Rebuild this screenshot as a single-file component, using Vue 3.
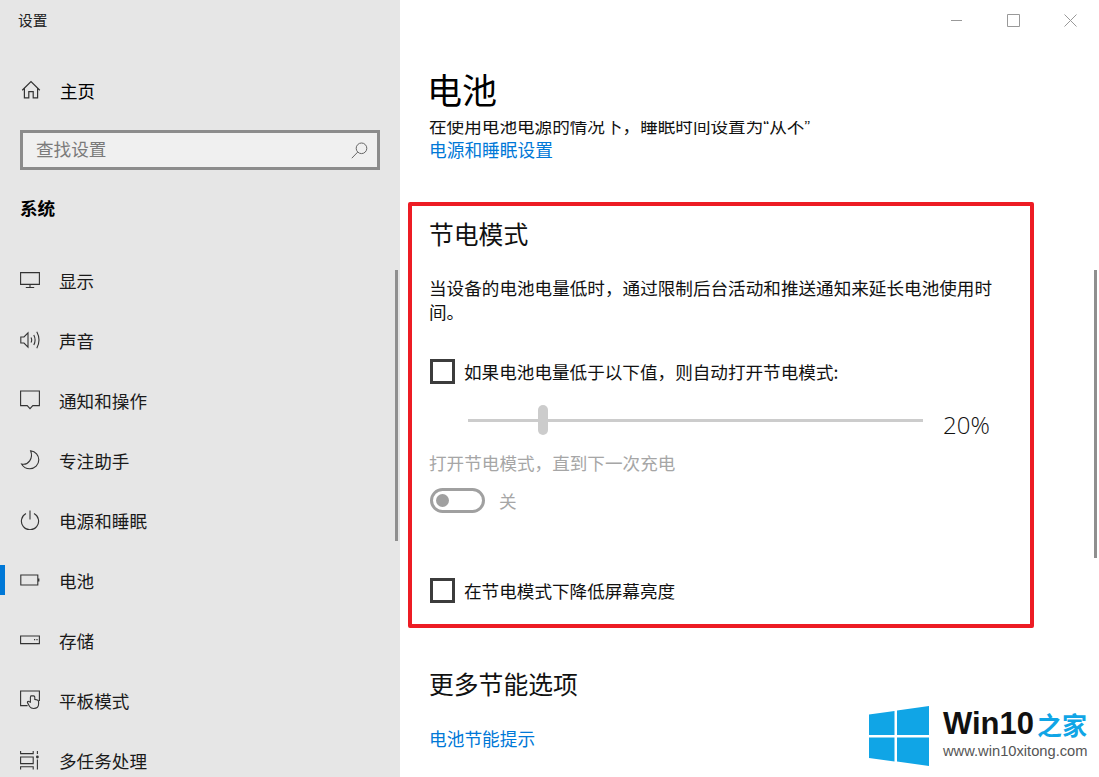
<script setup>
const nav = [
  { key: 'display', label: '显示' },
  { key: 'sound', label: '声音' },
  { key: 'notify', label: '通知和操作' },
  { key: 'focus', label: '专注助手' },
  { key: 'power', label: '电源和睡眠' },
  { key: 'battery', label: '电池', active: true },
  { key: 'storage', label: '存储' },
  { key: 'tablet', label: '平板模式' },
  { key: 'multi', label: '多任务处理' }
]
</script>

<template>
  <div class="window">
    <aside class="side">
      <div class="app-title">设置</div>
      <div class="home">
        <svg class="ico" width="20" height="20" viewBox="0 0 20 20" fill="none" stroke="#333" stroke-width="1.2">
          <path d="M1.2 10.200 10 1.600l8.800 8.600M3.400 8.400v9.400h4.400v-6.200h4.400v6.200h4.400V8.400" />
        </svg>
        <span class="home-label">主页</span>
      </div>
      <div class="search">
        <span class="ph">查找设置</span>
        <svg width="17" height="17" viewBox="0 0 17 17" fill="none" stroke="#666" stroke-width="1">
          <circle cx="10.500" cy="6.300" r="5.300" /><path d="M6.700 10.100.8 16.200" />
        </svg>
      </div>
      <div class="group">系统</div>
      <nav class="nav">
        <div v-for="item in nav" :key="item.key" class="row">
          <i v-if="item.active" class="mark"></i>
          <svg class="ico" width="20" height="20" viewBox="0 0 20 20" fill="none" stroke="#333" stroke-width="1.1">
            <template v-if="item.key === 'display'">
              <path d="M.6 2.600h18.800v11.800H.6zM10 14.400v3M5.800 17.500h8.400" />
            </template>
            <template v-else-if="item.key === 'sound'">
              <path d="M.8 7h3.200L8 2.800v14.400L4 13H.8zM11 7.400q1.400 2.600 0 5.200M13.800 5q2.600 5 0 10M16.800 1.800q4.400 8.200 0 16.400" />
            </template>
            <template v-else-if="item.key === 'notify'">
              <path d="M.6 1h18.800v14.600h-6.600L10 18.600l-2.800-3H.6z" />
            </template>
            <template v-else-if="item.key === 'focus'">
              <path d="M10.600.8c5 .6 8.200 4.600 8.200 9 0 5-4 9-9 9-3.600 0-6.600-1.800-8.200-4.800 6.600 1.600 12-5.600 9-13.200z" />
            </template>
            <template v-else-if="item.key === 'power'">
              <path d="M6 3.600a8.600 8.600 0 1 0 8 0M10 .6v9" />
            </template>
            <template v-else-if="item.key === 'battery'">
              <path d="M.8 5h17v10H.8z" />
              <path d="M18 8.500h1.400v3H18z" fill="#333" stroke="none" />
            </template>
            <template v-else-if="item.key === 'storage'">
              <path d="M.6 6h18.800v7.600H.6zM14 9.600h1.200M16.400 9.600h1.200" />
            </template>
            <template v-else-if="item.key === 'tablet'">
              <path d="M7.600 15.600H.6V1h18.800v10" />
              <path d="M12 5.600c-1 0-1.600.7-1.600 1.600v5l-1.600-.8c-1-.4-1.800.6-1.200 1.500l2 3.600c1 1.400 2.400 2 4 2 3 0 5-1.600 5-4.400v-2.600c0-1.400-1.600-1.800-3.800-2.100V7.200c0-.9-.8-1.600-2.800-1.600z" />
            </template>
            <template v-else>
              <path d="M.6 1v2.600h12.600V1M.6 7h12.600v6.600H.6zM.6 19.600v-2.800h12.600v2.800M17.400 1v3M17.400 9.600v10" />
              <circle cx="17.400" cy="7" r="1.400" fill="#333" stroke="none" />
            </template>
          </svg>
          <span class="row-label">{{ item.label }}</span>
        </div>
      </nav>
      <i class="side-scroll"></i>
    </aside>

    <main class="main">
      <div class="controls">
        <svg width="13" height="13" viewBox="0 0 13 13" stroke="#999" fill="none"><path d="M1 6.500h11" /></svg>
        <svg width="13" height="13" viewBox="0 0 13 13" stroke="#999" fill="none"><path d="M.5.500h12v12H.5z" /></svg>
        <svg width="13" height="13" viewBox="0 0 13 13" stroke="#999" fill="none"><path d="M.5.500l12 12M12.500.500l-12 12" /></svg>
      </div>
      <h1 class="title">电池</h1>
      <div class="clip"><p class="clip-text">在使用电池电源的情况下，睡眠时间设置为<span class="q">“</span>从不<span class="q">”</span></p></div>
      <a class="link">电源和睡眠设置</a>

      <section class="box">
        <h2 class="h2">节电模式</h2>
        <p class="desc">当设备的电池电量低时，通过限制后台活动和推送通知来延长电池使用时间。</p>
        <div class="check first"><i class="cb"></i><span>如果电池电量低于以下值，则自动打开节电模式:</span></div>
        <div class="slider">
          <div class="track"><i class="thumb"></i></div>
          <span class="pct">20%</span>
        </div>
        <div class="muted label">打开节电模式，直到下一次充电</div>
        <div class="toggle-row">
          <span class="toggle"><i class="knob"></i></span>
          <span class="muted">关</span>
        </div>
        <div class="check second"><i class="cb"></i><span>在节电模式下降低屏幕亮度</span></div>
      </section>

      <h2 class="h2 more">更多节能选项</h2>
      <a class="link tip">电池节能提示</a>
      <i class="main-scroll"></i>
    </main>

    <div class="mark-logo">
      <svg width="60" height="60" viewBox="0 0 60 60" fill="#10a5e6">
        <path d="M0 8.500 25.500 5v24H0zM28 4.600 60 0v29H28zM0 31.500h25.500v24L0 52zM28 31.500h32V60l-32-4.500z" />
      </svg>
      <div class="mark-text">
        <div class="mark-top"><span class="w">Win10</span><span class="z">之家</span></div>
        <div class="mark-url">www.win10xitong.com</div>
      </div>
    </div>
  </div>
</template>

<style>
html, body { margin: 0; overflow: hidden; background: #fff; }
</style>

<style scoped>
.window {
  position: relative;
  display: flex;
  width: 1099px;
  height: 777px;
  overflow: hidden;
  font-family: "Noto Sans CJK SC", "Noto Sans", sans-serif;
  font-size: 17.6px;
  color: #111;
}
.side {
  position: relative;
  flex: 0 0 400px;
  background: #e6e6e6;
  box-sizing: border-box;
}
.app-title {
  height: 20px;
  padding: 10px 0 0 18px;
  font-size: 14.700px;
  line-height: 20px;
  color: #222;
}
.home {
  display: flex;
  align-items: center;
  height: 40px;
  margin-top: 40px;
  padding-left: 21px;
}
.home-label { margin-left: 19px; color: #000; }
.ico { flex: none; display: block; }
.search {
  display: flex;
  align-items: center;
  justify-content: space-between;
  box-sizing: border-box;
  width: 360px;
  height: 40px;
  margin: 20px 0 0 20px;
  padding: 0 9px 0 13px;
  border: 3px solid #8c8c8c;
  background: #f0f0f0;
}
.ph { color: #7a7a7a; line-height: 32px; margin-top: -2px; }
.group {
  margin: 25px 0 0 20px;
  height: 26px;
  line-height: 26px;
  font-weight: 700;
  color: #000;
}
.nav { margin-top: 29px; }
.row {
  position: relative;
  display: flex;
  align-items: center;
  height: 60px;
  padding-left: 20px;
}
.row-label { margin-left: 19px; color: #1a1a1a; }
.mark {
  position: absolute;
  left: 0;
  top: 15px;
  width: 5px;
  height: 30px;
  background: #0078d7;
}
.side-scroll {
  position: absolute;
  left: 395px;
  top: 270px;
  width: 3px;
  height: 271px;
  background: #8f8f8f;
}
.main {
  position: relative;
  flex: 1;
  min-width: 0;
  background: #fff;
}
.controls {
  display: flex;
  justify-content: flex-end;
  gap: 44px;
  height: 13px;
  padding: 14px 22px 0 0;
}
.controls svg { display: block; }
.title {
  margin: 37px 0 0 27px;
  height: 50px;
  font-size: 35px;
  line-height: 50px;
  font-weight: 400;
  color: #000;
}
.clip {
  height: 15px;
  margin: 7px 0 0 29px;
  overflow: hidden;
}
.clip-text {
  margin: -8px 0 0;
  line-height: 26px;
  white-space: nowrap;
  color: #111;
}
.q { font-family: "Liberation Sans", sans-serif; }
.link {
  display: block;
  color: #0078d7;
  font-size: 17.700px;
  line-height: 26px;
  margin-left: 29px;
}
.box {
  box-sizing: border-box;
  width: 626px;
  height: 426px;
  margin: 40px 0 0 8px;
  padding: 0 0 0 18px;
  border: 4px solid #ed1c24;
  border-radius: 2px;
}
.h2 {
  margin: 0;
  font-size: 24.800px;
  line-height: 36px;
  font-weight: 400;
  color: #111;
}
.box > .h2 { margin: 9px 0 0 -1px; }
.desc {
  width: 566px;
  margin: 25px 0 0 -1px;
  line-height: 24px;
  color: #111;
}
.check {
  display: flex;
  align-items: center;
  gap: 9px;
  height: 25px;
  color: #111;
}
.first { margin-top: 35px; }
.second { margin-top: 65px; }
.cb {
  box-sizing: border-box;
  display: block;
  width: 25px;
  height: 25px;
  border: 3px solid #3c3c3c;
  flex: none;
}
.slider {
  display: flex;
  align-items: center;
  height: 30px;
  margin: 21px 0 0 38px;
}
.track {
  position: relative;
  width: 455px;
  height: 3px;
  background: #ccc;
}
.thumb {
  position: absolute;
  left: 70px;
  top: -14px;
  width: 10px;
  height: 30px;
  border-radius: 5px;
  background: #ccc;
}
.pct {
  margin: 10px 0 0 20px;
  font-family: "Open Sans", sans-serif;
  font-size: 24px;
  font-weight: 300;
  line-height: 30px;
  color: #111;
}
.muted { color: #a6a6a6; }
.label { margin: 13px 0 0 -1px; height: 30px; line-height: 30px; }
.toggle-row {
  display: flex;
  align-items: center;
  gap: 14px;
  margin-top: 10px;
  height: 25px;
}
.toggle {
  box-sizing: border-box;
  position: relative;
  display: block;
  width: 55px;
  height: 25px;
  border: 3px solid #a0a0a0;
  border-radius: 13px;
}
.knob {
  position: absolute;
  left: 3px;
  top: 3px;
  width: 13px;
  height: 13px;
  border-radius: 50%;
  background: #a0a0a0;
}
.more { margin: 37px 0 0 29px; }
.tip { margin-top: 24px; }
.main-scroll {
  position: absolute;
  left: 694px;
  top: 270px;
  width: 3px;
  height: 288px;
  background: #8f8f8f;
}
.mark-logo {
  position: absolute;
  left: 869px;
  top: 706px;
  display: flex;
  gap: 14px;
}
.mark-logo svg { display: block; flex: none; }
.mark-text { width: 150px; }
.mark-top {
  display: flex;
  align-items: center;
  height: 36px;
}
.w {
  font-family: "Liberation Sans", sans-serif;
  font-size: 31px;
  font-weight: 700;
  color: #111;
}
.z {
  margin-left: 3px;
  font-size: 25px;
  font-weight: 700;
  color: #10a5e6;
}
.mark-url {
  font-family: "Liberation Sans", sans-serif;
  font-size: 14.700px;
  line-height: 18px;
  white-space: nowrap;
  color: #555;
}
</style>
